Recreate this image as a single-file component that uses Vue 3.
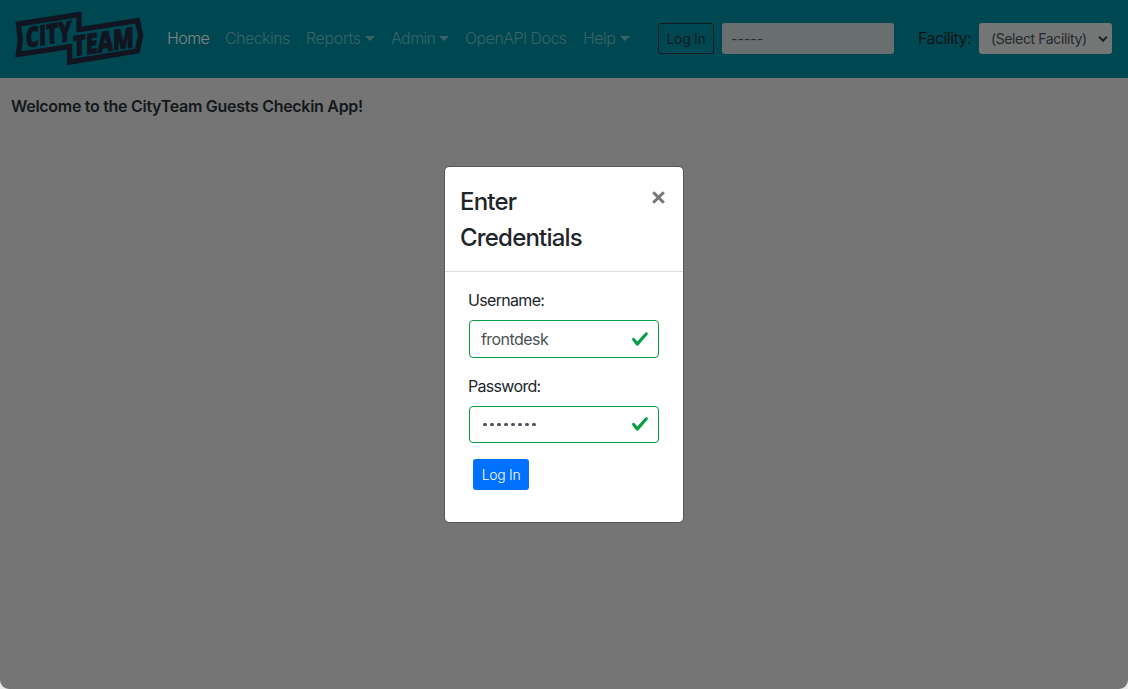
<script setup>
import { ref } from 'vue'

const navItems = [
  { label: 'Home', width: 42, active: true, ls: -0.6 },
  { label: 'Checkins', width: 65, ls: -0.55 },
  { label: 'Reports', width: 69, menu: true, ls: -0.35 },
  { label: 'Admin', width: 58, menu: true, ls: -0.6 },
  { label: 'OpenAPI Docs', width: 102, ls: -0.55 },
  { label: 'Help', width: 47, menu: true, ls: -0.5 }
]
const username = ref('frontdesk')
</script>

<template>
  <div class="window">
    <div class="page">
      <header class="navbar">
        <svg class="logo" viewBox="0 0 480 234" width="160" height="78" aria-label="City Team">
          <path d="M55 72L237 44V89L412 62L422 105L412 153L209 186V140L55 163L61 118Z" fill="none" stroke="#111522" stroke-width="16" />
          <g fill="#111522" stroke="#111522" stroke-width="3" font-family="Open Sans, sans-serif" font-weight="800" font-size="84">
            <text transform="matrix(1 -.15 0 1 77 143)" textLength="138" lengthAdjust="spacingAndGlyphs">CITY</text>
            <text transform="matrix(1 -.15 0 1 219 169)" textLength="182" lengthAdjust="spacingAndGlyphs">TEAM</text>
          </g>
        </svg>
        <nav class="nav">
          <a v-for="item in navItems" :key="item.label" class="link" :class="{ active: item.active }" :style="{ width: item.width + 'px', letterSpacing: item.ls + 'px' }">
            {{ item.label }}<i v-if="item.menu" class="caret"></i>
          </a>
        </nav>
        <button class="outline-btn">Log In</button>
        <div class="user">-----</div>
        <span class="facility-label">Facility:</span>
        <div class="select">
          <span>(Select Facility)</span>
          <svg width="10" height="8" viewBox="0 0 10 8"><path d="M1 1.6L5 5.7L9 1.6" fill="none" stroke="#1b1e22" stroke-width="2" /></svg>
        </div>
      </header>
      <main class="welcome">Welcome to the CityTeam Guests Checkin App!</main>
    </div>

    <section class="modal" role="dialog">
      <header class="modal-head">
        <h1>Enter<br />Credentials</h1>
        <button class="close" aria-label="Close">
          <svg width="13" height="13" viewBox="0 0 13 13"><path d="M1.2 1.2L11.8 11.8M11.8 1.2L1.2 11.8" stroke="#777" stroke-width="3" /></svg>
        </button>
      </header>
      <form class="form" @submit.prevent>
        <label>Username:</label>
        <div class="field">
          <span>{{ username }}</span>
          <svg class="check" viewBox="0 0 8 8"><path fill="#079d46" d="M2.3 6.73L.6 4.53c-.4-1.04.46-1.4 1.1-.8l1.1 1.4 3.4-3.8c.6-.63 1.6-.27 1.2.7l-4 4.6c-.43.5-.8.4-1.1.1z" /></svg>
        </div>
        <label class="second">Password:</label>
        <div class="field password">
          <span class="dots"><i v-for="n in 8" :key="n"></i></span>
          <svg class="check" viewBox="0 0 8 8"><path fill="#079d46" d="M2.3 6.73L.6 4.53c-.4-1.04.46-1.4 1.1-.8l1.1 1.4 3.4-3.8c.6-.63 1.6-.27 1.2.7l-4 4.6c-.43.5-.8.4-1.1.1z" /></svg>
        </div>
        <button class="submit">Log In</button>
      </form>
    </section>
  </div>
</template>

<style>
body {
  background: #e8e8e8;
}
</style>

<style scoped>
* {
  box-sizing: border-box;
}
.window {
  position: relative;
  width: 1128px;
  height: 689px;
  font: 400 16px/24px Inter, sans-serif;
  color: #212529;
  overflow: hidden;
}
.page {
  height: 689px;
  background: #757575;
  border-radius: 0 0 9px 9px;
  overflow: hidden;
}
.navbar {
  height: 78px;
  padding-bottom: 1px;
  background: #004851;
  display: flex;
  align-items: center;
  white-space: nowrap;
}
.logo {
  flex: none;
}
.nav {
  display: flex;
  gap: 16px;
  width: 491px;
  padding: 0 0 1px 7px;
}
.link {
  flex: none;
  display: flex;
  align-items: center;
  justify-content: space-between;
  font-weight: 300;
  color: #3a6367;
}
.active {
  color: #828584;
}
.caret {
  border: 5px solid transparent;
  border-top-color: currentColor;
  border-bottom: 0;
}
button {
  font-family: inherit;
  padding: 0;
}
.outline-btn {
  margin-left: 7px;
  width: 56px;
  height: 31px;
  border: 1px solid #14191c;
  border-radius: 3px;
  background: none;
  color: #14191c;
  font-size: 14px;
  letter-spacing: -0.3px;
}
.user {
  margin-left: 8px;
  width: 172px;
  height: 31px;
  padding-left: 9px;
  line-height: 31px;
  font-size: 14px;
  background: #696e6e;
  color: #25302f;
  border-radius: 3px;
}
.facility-label {
  width: 53px;
  margin-left: 24px;
  padding-bottom: 1px;
  color: #0d1517;
  letter-spacing: -0.55px;
}
.select {
  margin-left: 8px;
  width: 133px;
  height: 31px;
  padding: 0 4px 0 12px;
  display: flex;
  align-items: center;
  justify-content: space-between;
  font-size: 14px;
  letter-spacing: -0.38px;
  color: #25282d;
  background: #747575;
  border-radius: 3px;
}
.welcome {
  padding: 16px 11px;
  font-weight: 600;
  color: #14181a;
  letter-spacing: -0.29px;
}
.modal {
  position: absolute;
  left: 444px;
  top: 166px;
  width: 240px;
  height: 357px;
  background: #fff;
  background-clip: padding-box;
  border: 1px solid #595959;
  border-radius: 5px;
}
.modal-head {
  height: 105px;
  padding: 17px 18px 0 15px;
  display: flex;
  justify-content: space-between;
  border-bottom: 1px solid #d8dee2;
}
h1 {
  margin: 0;
  font-size: 24px;
  line-height: 36px;
  font-weight: 500;
  letter-spacing: -0.8px;
}
.close {
  margin-top: 7px;
  height: 13px;
  border: 0;
  background: none;
  line-height: 0;
}
.form {
  padding: 16px 24px 0;
}
label {
  display: block;
  height: 32px;
  margin-left: -1px;
  letter-spacing: -0.68px;
}
.second {
  margin-top: 16px;
}
.field {
  height: 38px;
  border: 1px solid #079d46;
  border-radius: 4px;
  padding: 0 9px 0 11px;
  display: flex;
  align-items: center;
  justify-content: space-between;
  color: #495057;
  letter-spacing: -0.55px;
}
.password {
  height: 37px;
}
.password .check {
  margin-top: -1px;
}
.check {
  width: 18px;
  height: 18px;
}
.dots {
  display: flex;
  gap: 3.5px;
  padding-left: 2px;
}
.dots i {
  width: 3.5px;
  height: 3.5px;
  border-radius: 50%;
  background: #495057;
}
.submit {
  display: block;
  margin: 16px 0 0 4px;
  width: 56px;
  height: 31px;
  border: 0;
  border-radius: 3px;
  background: #0070ff;
  color: #fff;
  font-size: 14px;
  font-weight: 300;
  letter-spacing: -0.3px;
}
</style>
